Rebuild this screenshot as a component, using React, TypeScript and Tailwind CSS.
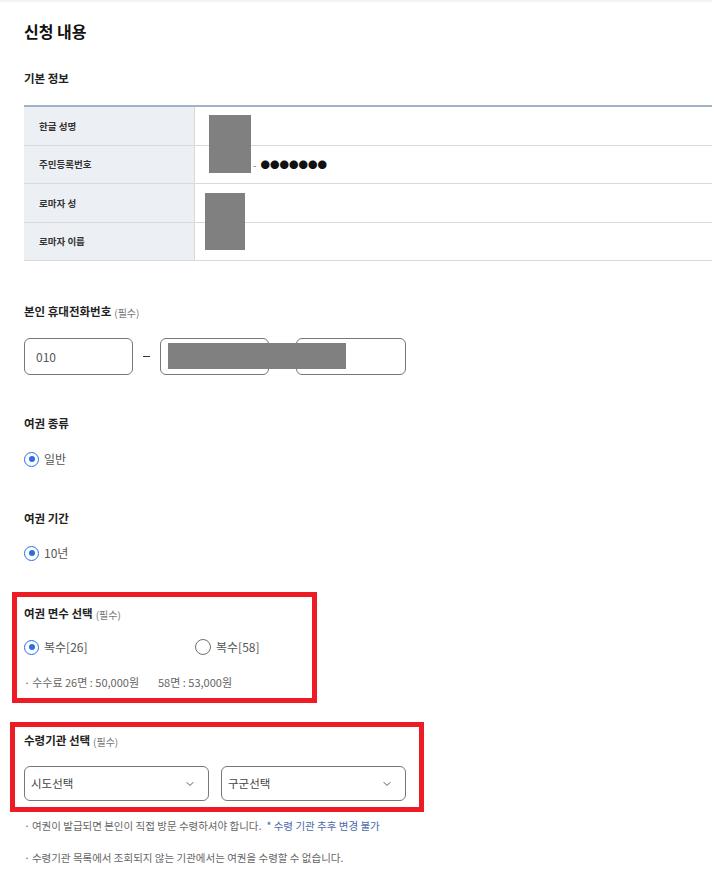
import { ChevronDown } from "lucide-react";

const font = "[font-family:'Noto_Sans_CJK_KR','Noto_Sans',sans-serif]";

function Radio({ checked, label }: { checked: boolean; label: string }) {
  return (
    <label className="flex items-center gap-[5px] h-[18px]">
      {checked ? (
        <span className="w-[15px] h-[15px] rounded-full border-[1.5px] border-[#2a6de8] flex items-center justify-center">
          <span className="w-[6px] h-[6px] rounded-full bg-[#2a6de8]" />
        </span>
      ) : (
        <span className="w-[16px] h-[16px] rounded-full border border-[#707070]" />
      )}
      <span className="text-[12px] text-[#555]">{label}</span>
    </label>
  );
}

function FieldLabel({ title, required }: { title: string; required?: boolean }) {
  return (
    <div className="h-[18px] flex items-center text-[11.5px] font-bold text-[#222]">
      {title}
      {required && <span className="ml-[3px] text-[10px] font-normal text-[#777]">(필수)</span>}
    </div>
  );
}

const rows = ["한글 성명", "주민등록번호", "로마자 성", "로마자 이름"];

export default function App() {
  return (
    <div className={`${font} bg-white min-h-[870px] w-[712px] overflow-hidden`}>
      <div className="h-[3px] bg-gradient-to-b from-[#f0f0f0] to-white" />
      <div className="pl-6">
        <h1 className="mt-[17px] h-[22px] flex items-center text-[16px] font-bold text-[#111]">신청 내용</h1>

        <div className="mt-[28px]">
          <FieldLabel title="기본 정보" />
        </div>

        {/* 기본 정보 table */}
        <div className="relative mt-[17px] border-t-2 border-[#a3b3c6]">
          {rows.map((r, i) => (
            <div key={r} className="flex h-[38.5px] border-b border-[#d9d9d9]">
              <div className="w-[171px] bg-[#eceff3] border-r border-[#d9d9d9] flex items-center pl-[15px] text-[9.5px] font-semibold text-[#333]">
                {r}
              </div>
              <div className="flex-1 flex items-center">
                {i === 1 && (
                  <span className="pl-[58px] text-[10px] text-[#111] flex items-center gap-[4px]">
                    <span className="text-[#777]">-</span>
                    <span className="text-[9.5px]">●●●●●●●</span>
                  </span>
                )}
              </div>
            </div>
          ))}
          <div className="absolute left-[185px] top-[8px] w-[42px] h-[58px] bg-[#808080]" />
          <div className="absolute left-[181px] top-[86px] w-[40px] h-[57px] bg-[#808080]" />
        </div>

        <div className="mt-[42px]">
          <FieldLabel title="본인 휴대전화번호" required />
        </div>

        <div className="relative mt-[17px] flex items-center">
          <div className="w-[109px] h-[37px] rounded-[6px] border border-[#777] flex items-center pl-[11px] text-[12px] text-[#555]">
            010
          </div>
          <div className="w-[27px] flex justify-center">
            <span className="w-[7px] h-px bg-[#333]" />
          </div>
          <div className="w-[109px] h-[37px] rounded-[6px] border border-[#777]" />
          <div className="w-[27px]" />
          <div className="w-[110px] h-[37px] rounded-[6px] border border-[#777]" />
          <div className="absolute left-[144px] top-[5px] w-[178px] h-[26px] bg-[#808080]" />
        </div>

        <div className="mt-[40px]">
          <FieldLabel title="여권 종류" />
        </div>
        <div className="mt-[17px]">
          <Radio checked label="일반" />
        </div>

        <div className="mt-[42px]">
          <FieldLabel title="여권 기간" />
        </div>
        <div className="mt-[16px]">
          <Radio checked label="10년" />
        </div>

        {/* 여권 면수 선택 */}
        <section className="mt-[30px] -ml-3 w-[305px] border-[5px] border-[#ed1c24] pl-[7px] pt-[8px] pb-[9px]">
          <FieldLabel title="여권 면수 선택" required />
          <div className="mt-[15px] flex">
            <div className="w-[171px]">
              <Radio checked label="복수[26]" />
            </div>
            <Radio checked={false} label="복수[58]" />
          </div>
          <p className="mt-[19px] h-[14px] flex items-center text-[11px] text-[#666]">
            <span className="mr-[2px]">·</span>수수료 26면 : 50,000원
            <span className="ml-[19px]">58면 : 53,000원</span>
          </p>
        </section>

        {/* 수령기관 선택 */}
        <section className="mt-[19px] -ml-[14px] w-[414px] border-[5px] border-[#ed1c24] pl-[9px] pt-[5px] pb-[6px]">
          <FieldLabel title="수령기관 선택" required />
          <div className="mt-[16px] flex gap-[12px]">
            {["시도선택", "구군선택"].map((s) => (
              <div
                key={s}
                className="w-[185px] h-[35px] rounded-[6px] border border-[#777] flex items-center justify-between pl-[6px] pr-[12px] text-[11.5px] text-[#444]"
              >
                {s}
                <ChevronDown className="w-[12px] h-[12px] text-[#444]" strokeWidth={1.8} />
              </div>
            ))}
          </div>
        </section>

        <p className="mt-[7px] h-[14px] flex items-center text-[10.5px] text-[#666]">
          <span className="mr-[2px]">·</span>여권이 발급되면 본인이 직접 방문 수령하셔야 합니다.
          <span className="ml-[5px] text-[#4a6aa8]">* 수령 기관 추후 변경 불가</span>
        </p>
        <p className="mt-[18px] h-[14px] flex items-center text-[10.5px] text-[#666]">
          <span className="mr-[2px]">·</span>수령기관 목록에서 조회되지 않는 기관에서는 여권을 수령할 수 없습니다.
        </p>
      </div>
    </div>
  );
}
